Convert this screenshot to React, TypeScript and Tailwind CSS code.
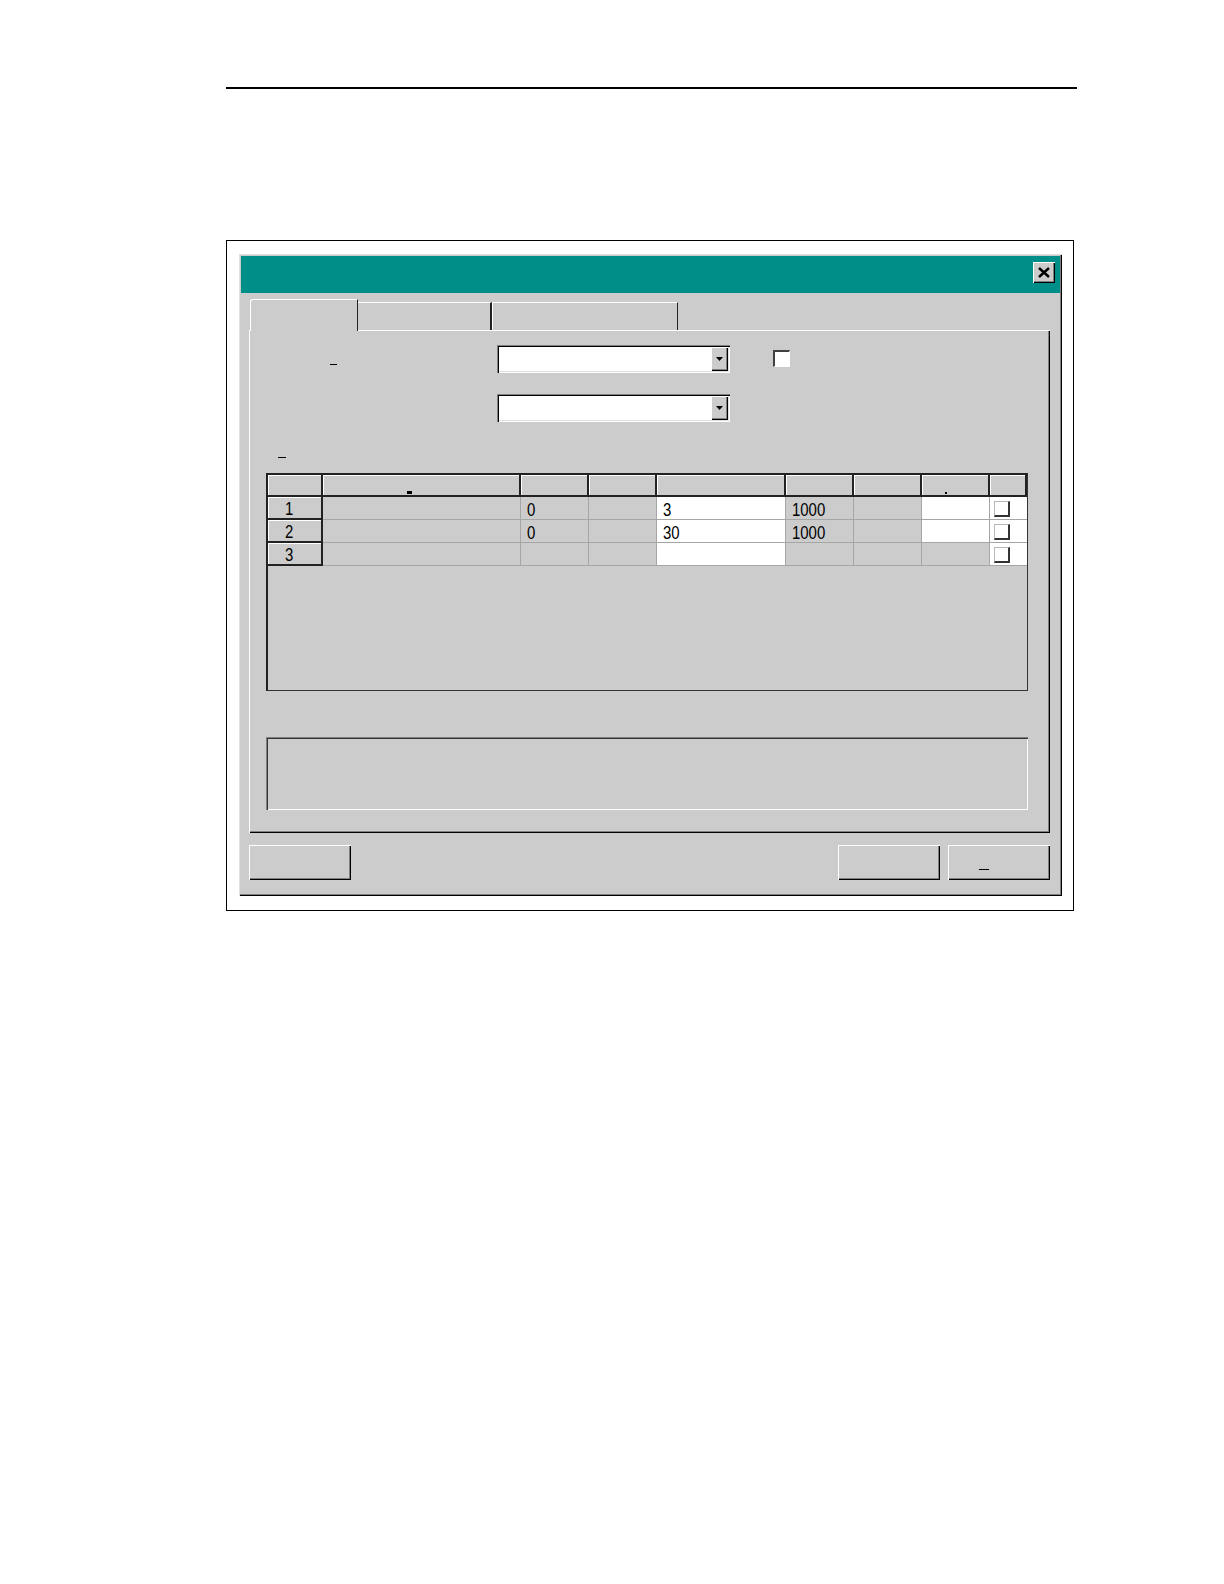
import React from 'react';

// Win95-style bevels
const raised = 'shadow-[inset_1px_1px_0_#ffffff,inset_-1px_-1px_0_#000000,inset_-2px_-2px_0_#808080]';
const sunken = 'shadow-[inset_1px_1px_0_#808080,inset_2px_2px_0_#000000,inset_-1px_-1px_0_#ffffff,inset_-2px_-2px_0_#dfdfdf]';

// grid column widths; the last one (checkbox) takes what is left
const cols = [55, 198, 68, 68, 129, 68, 68, 68];

type Row = { n: string; c2: string; c4: string; c5: string; white7: boolean };
const rows: Row[] = [
  { n: '1', c2: '0', c4: '3', c5: '1000', white7: true },
  { n: '2', c2: '0', c4: '30', c5: '1000', white7: true },
  { n: '3', c2: '', c4: '', c5: '', white7: false },
];

// condensed old-style dialog font
function Txt({ children }: { children: React.ReactNode }) {
  return <span className="inline-block text-[18px] leading-none scale-x-[0.83] origin-left">{children}</span>;
}

function Combo() {
  return (
    <div className={`w-[233px] h-[28px] bg-white flex justify-end pt-[2px] pr-[2px] ${sunken}`}>
      <div className={`w-[17px] h-[24px] bg-[#cccccc] flex items-center justify-center ${raised}`}>
        <svg width="7" height="4" viewBox="0 0 7 4">
          <path d="M0 0h7L3.5 4z" fill="#000" />
        </svg>
      </div>
    </div>
  );
}

function GridCheck() {
  return (
    <div className="w-[16px] h-[16px] bg-white border-t border-l border-[#b8b8b8] border-r-2 border-b-2 border-r-[#333] border-b-[#333]" />
  );
}

const cell = 'shrink-0 border-r border-b border-[#a6a6a6]';

export default function App() {
  return (
    <div className="min-h-screen bg-white" style={{ fontFamily: '"Liberation Sans", Arial, sans-serif' }}>
      <div className="pt-[87px] pl-[226px]">
        <div className="w-[851px] h-[2px] bg-black" />

        {/* Screenshot frame */}
        <div className="mt-[151px] w-[848px] h-[671px] border border-black pl-[12px] pt-[13px]">
          {/* Dialog */}
          <div className="w-[823px] h-[642px] bg-[#cccccc] p-[2px] shadow-[inset_1px_1px_0_#dfdfdf,inset_-1px_-1px_0_#000000,inset_-2px_-2px_0_#808080]">
            {/* Title bar */}
            <div className="h-[37px] bg-[#008e89] flex justify-end pt-[6px] pr-[5px]">
              <div className={`w-[22px] h-[21px] bg-[#cccccc] flex items-center justify-center ${raised}`}>
                <svg width="12" height="11" viewBox="0 0 12 11">
                  <path d="M1 1l10 9M11 1L1 10" stroke="#000" strokeWidth="2.4" />
                </svg>
              </div>
            </div>

            {/* Tabs */}
            <div className="mt-[6px] pl-[9px] flex items-end h-[31px]">
              <div className="relative z-10 -mb-px w-[108px] h-[32px] bg-[#cccccc] rounded-tl-[3px] border-t border-l border-white border-r border-r-[#222]" />
              <div className="w-[134px] h-[28px] bg-[#cccccc] border-t border-white border-r-2 border-r-[#222]" />
              <div className="w-[186px] h-[28px] bg-[#cccccc] border-t border-l border-white border-r border-r-[#222]" />
            </div>

            {/* Tab panel */}
            <div className="ml-[8px] w-[801px] h-[503px] pl-[17px] pt-[15px] shadow-[inset_1px_1px_0_#ffffff,inset_-1px_-1px_0_#000000,inset_-2px_-2px_0_#808080]">
              <div className="flex items-start">
                <div className="w-[231px] h-[28px]">
                  <div className="ml-[64px] mt-[19px] w-[7px] h-px bg-black" />
                </div>
                <Combo />
                <div className="ml-[43px] mt-[5px] w-[17px] h-[17px] bg-white border-t-2 border-l-2 border-[#404040] border-r border-b border-r-white border-b-white" />
              </div>

              <div className="mt-[21px] ml-[231px]">
                <Combo />
              </div>

              <div className="mt-[35px] ml-[12px] w-[8px] h-px bg-black" />

              {/* Grid */}
              <div className="mt-[15px] w-[762px] h-[218px] overflow-hidden border border-[#333] border-t-2 border-l-2 border-t-[#222] border-l-[#222]">
                <div className="flex">
                  {[...cols, 0].map((w, i) => (
                    <div
                      key={i}
                      className={`h-[22px] ${i === 8 ? 'flex-1' : 'shrink-0'} bg-[#cccccc] border-r-2 border-b-2 border-[#222] shadow-[inset_1px_1px_0_#ffffff] flex items-end justify-center pb-[1px]`}
                      style={i === 8 ? undefined : { width: w }}
                    >
                      {i === 1 && <div className="w-[5px] h-[3px] bg-black -ml-[23px]" />}
                      {i === 7 && <div className="w-[2px] h-[2px] bg-black -ml-[18px]" />}
                    </div>
                  ))}
                </div>
                {rows.map((r) => (
                  <div key={r.n} className="flex h-[23px] text-black">
                    <div className="w-[55px] shrink-0 bg-[#cccccc] border-r-2 border-b-2 border-[#222] shadow-[inset_1px_1px_0_#ffffff] flex items-center justify-center pt-[2px] pr-[9px]">
                      <Txt>{r.n}</Txt>
                    </div>
                    <div className={`w-[198px] ${cell}`} />
                    <div className={`w-[68px] ${cell} flex items-center pl-[6px] pt-[3px]`}><Txt>{r.c2}</Txt></div>
                    <div className={`w-[68px] ${cell}`} />
                    <div className={`w-[129px] ${cell} bg-white flex items-center pl-[6px] pt-[3px]`}><Txt>{r.c4}</Txt></div>
                    <div className={`w-[68px] ${cell} flex items-center pl-[6px] pt-[3px]`}><Txt>{r.c5}</Txt></div>
                    <div className={`w-[68px] ${cell}`} />
                    <div className={`w-[68px] ${cell} ${r.white7 ? 'bg-white' : ''}`} />
                    <div className="flex-1 bg-white border-b border-[#a6a6a6] flex items-center pl-[4px] pt-[2px]">
                      <GridCheck />
                    </div>
                  </div>
                ))}
              </div>

              {/* Memo */}
              <div className="mt-[46px] w-[762px] h-[73px] shadow-[inset_1px_1px_0_#808080,inset_2px_2px_0_#333333,inset_-1px_-1px_0_#ffffff]" />
            </div>

            {/* Buttons */}
            <div className="mt-[12px] flex justify-between pl-[8px] pr-[10px]">
              <div className={`w-[102px] h-[35px] ${raised}`} />
              <div className="flex gap-[8px]">
                <div className={`w-[102px] h-[35px] ${raised}`} />
                <div className={`w-[102px] h-[35px] flex items-end pl-[31px] pb-[10px] ${raised}`}>
                  <div className="w-[10px] h-px bg-black" />
                </div>
              </div>
            </div>
          </div>
        </div>
      </div>
    </div>
  );
}
